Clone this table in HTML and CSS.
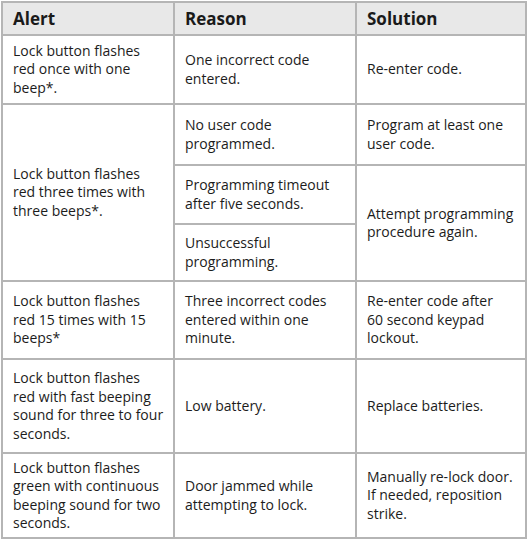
FILE: index.html
```html
<!DOCTYPE html>
<html>
<head>
<meta charset="utf-8">
<link rel="stylesheet" href="styles.css">
</head>
<body>
<table class="alerts">
  <colgroup>
    <col class="c1"><col class="c2"><col class="c3">
  </colgroup>
  <thead>
    <tr class="h-head"><th>Alert</th><th>Reason</th><th>Solution</th></tr>
  </thead>
  <tbody>
    <tr class="h-r1">
      <td>Lock button flashes<br>red once with one<br>beep*.</td>
      <td>One incorrect code<br>entered.</td>
      <td>Re-enter code.</td>
    </tr>
    <tr class="h-r2a">
      <td rowspan="3">Lock button flashes<br>red three times with<br>three beeps*.</td>
      <td>No user code<br>programmed.</td>
      <td>Program at least one<br>user code.</td>
    </tr>
    <tr class="h-r2b">
      <td>Programming timeout<br>after five seconds.</td>
      <td rowspan="2">Attempt programming<br>procedure again.</td>
    </tr>
    <tr class="h-r2c">
      <td>Unsuccessful<br>programming.</td>
    </tr>
    <tr class="h-r3">
      <td>Lock button flashes<br>red 15 times with 15<br>beeps*</td>
      <td>Three incorrect codes<br>entered within one<br>minute.</td>
      <td>Re-enter code after<br>60 second keypad<br>lockout.</td>
    </tr>
    <tr class="h-r4">
      <td>Lock button flashes<br>red with fast beeping<br>sound for three to four<br>seconds.</td>
      <td>Low battery.</td>
      <td>Replace batteries.</td>
    </tr>
    <tr class="h-r5">
      <td>Lock button flashes<br>green with continuous<br>beeping sound for two<br>seconds.</td>
      <td>Door jammed while<br>attempting to lock.</td>
      <td>Manually re-lock door.<br>If needed, reposition<br>strike.</td>
    </tr>
  </tbody>
</table>
</body>
</html>
```
FILE: styles.css
```css
html, body {
  background: #ffffff;
}
body {
  margin: 0;
  padding: 1px 0 0 1px;
  font-family: "Open Sans", "Noto Sans", sans-serif;
  color: #1c1c1c;
}
.alerts {
  border-collapse: collapse;
  width: 524px;
  table-layout: fixed;
  font-size: 14px;
  line-height: 18.5px;
}
.c1 { width: 172px; }
.c2 { width: 182px; }
.c3 { width: 170px; }
.alerts th,
.alerts td {
  border: 2px solid #b5b5b5;
  padding: 0 0 0 10px;
  text-align: left;
  vertical-align: middle;
  white-space: nowrap;
}
.alerts th {
  background: #e8e8e8;
  font-size: 17px;
  font-weight: 700;
  line-height: 20px;
  color: #1a1a1a;
}
.h-head { height: 33px; }
.h-r1 { height: 69px; }
.h-r2a { height: 61px; }
.h-r2b { height: 59px; }
.h-r2c { height: 57px; }
.h-r3 { height: 78px; }
.h-r4 { height: 94px; }
.h-r5 { height: 85px; }
```
